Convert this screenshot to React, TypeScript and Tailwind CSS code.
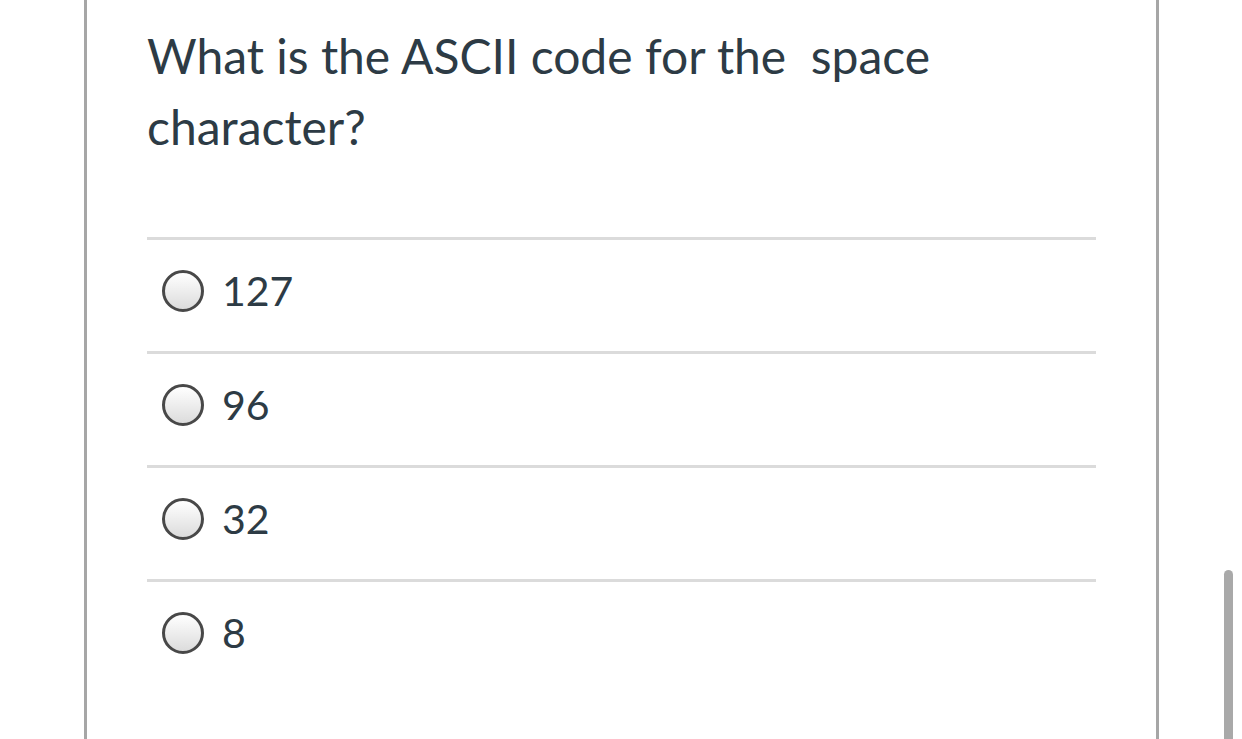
import React from "react";

const options = ["127", "96", "32", "8"];

const Radio = () => (
  <span className="block w-[42px] h-[42px] shrink-0 rounded-full border-[3px] border-[#484848] bg-gradient-to-b from-white to-[#dcdcdc]" />
);

const App = () => {
  return (
    <main className="relative h-[739px] w-full overflow-hidden bg-white font-['Lato',sans-serif] text-[#2d3b45]">
      {/* quiz card */}
      <section className="ml-[84px] w-[1075px] h-full border-x-[3px] border-[#a6a6a6] px-[60px]">
        <h1 className="pt-[20px] text-[48px] leading-[71px] font-normal whitespace-pre-wrap">
          {"What is the ASCII code for the  space character?"}
        </h1>

        <div className="mt-[75px]">
          {options.map((opt) => (
            <label key={opt} className="flex items-center gap-[18px] h-[114px] border-t-[3px] border-[#dbdbdb] pl-[15px] pb-[9px]">
              <Radio />
              <span className="text-[41px] leading-[42px]">{opt}</span>
            </label>
          ))}
        </div>
      </section>

      {/* scrollbar thumb */}
      <div className="absolute right-[9px] top-[570px] bottom-0 w-[9px] rounded-t-full bg-[#a9a9a9]" />
    </main>
  );
};

export default App;
